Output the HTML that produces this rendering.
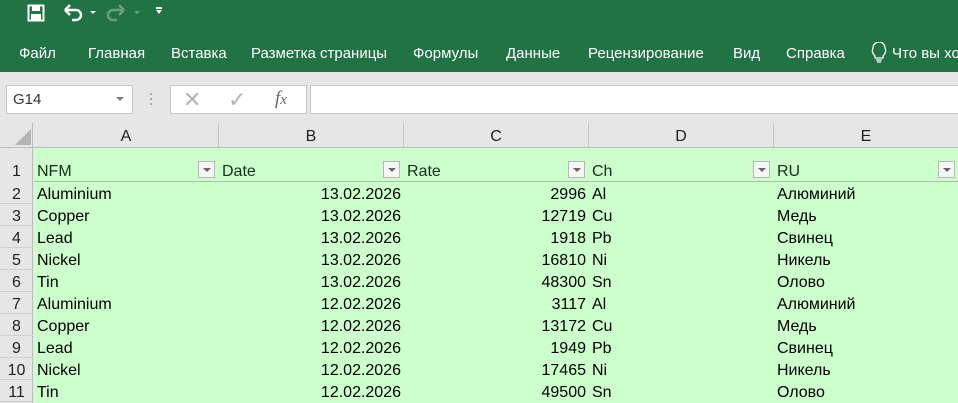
<!DOCTYPE html>
<html><head><meta charset="utf-8"><style>
*{margin:0;padding:0;box-sizing:border-box}
html,body{width:958px;height:403px;overflow:hidden}
body{background:#e6e6e6;font-family:"Liberation Sans","DejaVu Sans",sans-serif;position:relative}
.a{position:absolute;white-space:nowrap}
.top{left:0;top:0;width:958px;height:72px;background:#217346}
.tab{top:45px;color:#fff;font-size:15px}
.cell{font-size:16px;color:#000;height:22px;line-height:22px}
.rh{left:0;width:33px;text-align:center;font-size:16px;color:#222;height:22px;line-height:22px}
.ch{top:123px;height:24px;line-height:28px;text-align:center;font-size:16px;color:#222;border-right:1px solid #c8c8c8;background:#e6e6e6}
.fb{width:17px;height:17px;border:1px solid #b8b8b8;background:#f6f6f6;top:161px}
.fb:after{content:"";position:absolute;left:4px;top:6px;border-left:4px solid transparent;border-right:4px solid transparent;border-top:4px solid #666}
</style></head><body>
<div class="a top"></div>
<svg class="a" style="left:27px;top:4px" width="18" height="18" viewBox="0 0 18 18"><rect x="1.5" y="1.5" width="15" height="15" fill="none" stroke="#fff" stroke-width="2"/><rect x="5" y="2" width="8" height="5" fill="#fff"/><rect x="4" y="10" width="10" height="6" fill="#fff"/></svg>
<svg class="a" style="left:63px;top:4px" width="40" height="18" viewBox="0 0 40 18"><path d="M4 6 H13 a5 5 0 0 1 0 10 H9" fill="none" stroke="#fff" stroke-width="2.4"/><path d="M2 6 L7 1 M2 6 L7 11" stroke="#fff" stroke-width="2.4" fill="none"/><path d="M27 7 l3 3 l3 -3z" fill="#fff"/></svg>
<svg class="a" style="left:106px;top:4px" width="40" height="18" viewBox="0 0 40 18"><path d="M16 6 H7 a5 5 0 0 0 0 10 H11" fill="none" stroke="#6e9e80" stroke-width="2.4"/><path d="M18 6 L13 1 M18 6 L13 11" stroke="#6e9e80" stroke-width="2.4" fill="none"/><path d="M28 7 l3 3 l3 -3z" fill="#6e9e80"/></svg>
<div class="a" style="left:156px;top:7px;width:6px;height:1.5px;background:#fff"></div>
<svg class="a" style="left:156px;top:10px" width="8" height="6"><path d="M0 0h6l-3 4z" fill="#fff"/></svg>
<div class="a tab" style="left:19px">Файл</div>
<div class="a tab" style="left:88px">Главная</div>
<div class="a tab" style="left:171px">Вставка</div>
<div class="a tab" style="left:251px">Разметка страницы</div>
<div class="a tab" style="left:413px">Формулы</div>
<div class="a tab" style="left:506px">Данные</div>
<div class="a tab" style="left:588px">Рецензирование</div>
<div class="a tab" style="left:733px">Вид</div>
<div class="a tab" style="left:786px">Справка</div>
<svg class="a" style="left:871px;top:42px" width="16" height="22" viewBox="0 0 16 22"><path d="M4 14 C1 11 1 8 2 6 A6 6 0 0 1 14 6 C15 8 15 11 12 14 V16 H4Z" fill="none" stroke="#fff" stroke-width="1.3"/><path d="M5 18h6M6 20h4" stroke="#fff" stroke-width="1.3"/></svg>
<div class="a" style="left:892px;top:45px;width:66px;overflow:hidden;color:#fff;font-size:15px">Что вы хотите</div>
<div class="a" style="left:6px;top:85px;width:127px;height:29px;background:#fff;border:1px solid #c6c6c6"></div>
<div class="a" style="left:13px;top:91px;font-size:15px;color:#333">G14</div>
<svg class="a" style="left:116px;top:97px" width="8" height="5"><path d="M0 0h8l-4 4z" fill="#777"/></svg>
<div class="a" style="left:150px;top:93px;width:2px;height:2px;background:#aaa;box-shadow:0 5px #aaa,0 10px #aaa"></div>
<div class="a" style="left:170px;top:85px;width:137px;height:29px;background:#fff;border:1px solid #c6c6c6"></div>
<div class="a" style="left:183px;top:87px;font-size:22px;color:#b4b4b4">✕</div>
<div class="a" style="left:228px;top:87px;font-size:22px;color:#b4b4b4">✓</div>
<div class="a" style="left:275px;top:88px;font-size:19px;color:#666;font-family:'Liberation Serif',serif;font-style:italic">f<span style="font-size:15px">x</span></div>
<div class="a" style="left:310px;top:85px;width:648px;height:29px;background:#fff;border:1px solid #c6c6c6;border-right:none"></div>
<div class="a" style="left:0;top:123px;width:33px;height:280px;background:#e6e6e6;border-right:1px solid #bdbdbd"></div>
<svg class="a" style="left:15px;top:129px" width="16" height="16"><path d="M16 0V16H0Z" fill="#b4b4b4"/></svg>
<div class="a" style="left:34px;top:148px;width:924px;height:255px;background:#ccffcc"></div>
<div class="a" style="left:0;top:147px;width:958px;height:1px;background:#bdbdbd"></div>
<div class="a" style="left:34px;top:181px;width:924px;height:1px;background:#a9bfa9"></div>
<div class="a ch" style="left:34px;width:185px">A</div>
<div class="a ch" style="left:219px;width:185px">B</div>
<div class="a ch" style="left:404px;width:185px">C</div>
<div class="a ch" style="left:589px;width:185px">D</div>
<div class="a ch" style="left:774px;width:184px;border-right:none">E</div>
<div class="a rh" style="top:161px">1</div>
<div class="a cell" style="left:37px;top:161px;color:#12301a">NFM</div>
<div class="a cell" style="left:222px;top:161px;color:#12301a">Date</div>
<div class="a cell" style="left:407px;top:161px;color:#12301a">Rate</div>
<div class="a cell" style="left:592px;top:161px;color:#12301a">Ch</div>
<div class="a cell" style="left:777px;top:161px;color:#12301a">RU</div>
<div class="a fb" style="left:198px"></div>
<div class="a fb" style="left:383px"></div>
<div class="a fb" style="left:568px"></div>
<div class="a fb" style="left:753px"></div>
<div class="a fb" style="left:938px"></div>
<div id="rows"></div>
<script>
var d=[["Aluminium","13.02.2026","2996","Al","Алюминий"],["Copper","13.02.2026","12719","Cu","Медь"],["Lead","13.02.2026","1918","Pb","Свинец"],["Nickel","13.02.2026","16810","Ni","Никель"],["Tin","13.02.2026","48300","Sn","Олово"],["Aluminium","12.02.2026","3117","Al","Алюминий"],["Copper","12.02.2026","13172","Cu","Медь"],["Lead","12.02.2026","1949","Pb","Свинец"],["Nickel","12.02.2026","17465","Ni","Никель"],["Tin","12.02.2026","49500","Sn","Олово"]];
var h="";d.forEach(function(r,i){var t=184+i*22;
h+='<div class="a" style="left:0;top:'+(t+19)+'px;width:33px;height:1px;background:#d0d0d0"></div>';
h+='<div class="a rh" style="top:'+t+'px">'+(i+2)+'</div>';
h+='<div class="a cell" style="left:37px;top:'+t+'px">'+r[0]+'</div>';
h+='<div class="a cell" style="left:219px;width:182px;text-align:right;top:'+t+'px">'+r[1]+'</div>';
h+='<div class="a cell" style="left:404px;width:182px;text-align:right;top:'+t+'px">'+r[2]+'</div>';
h+='<div class="a cell" style="left:592px;top:'+t+'px">'+r[3]+'</div>';
h+='<div class="a cell" style="left:777px;top:'+t+'px">'+r[4]+'</div>';});
document.getElementById("rows").innerHTML=h;
</script>
</body></html>
